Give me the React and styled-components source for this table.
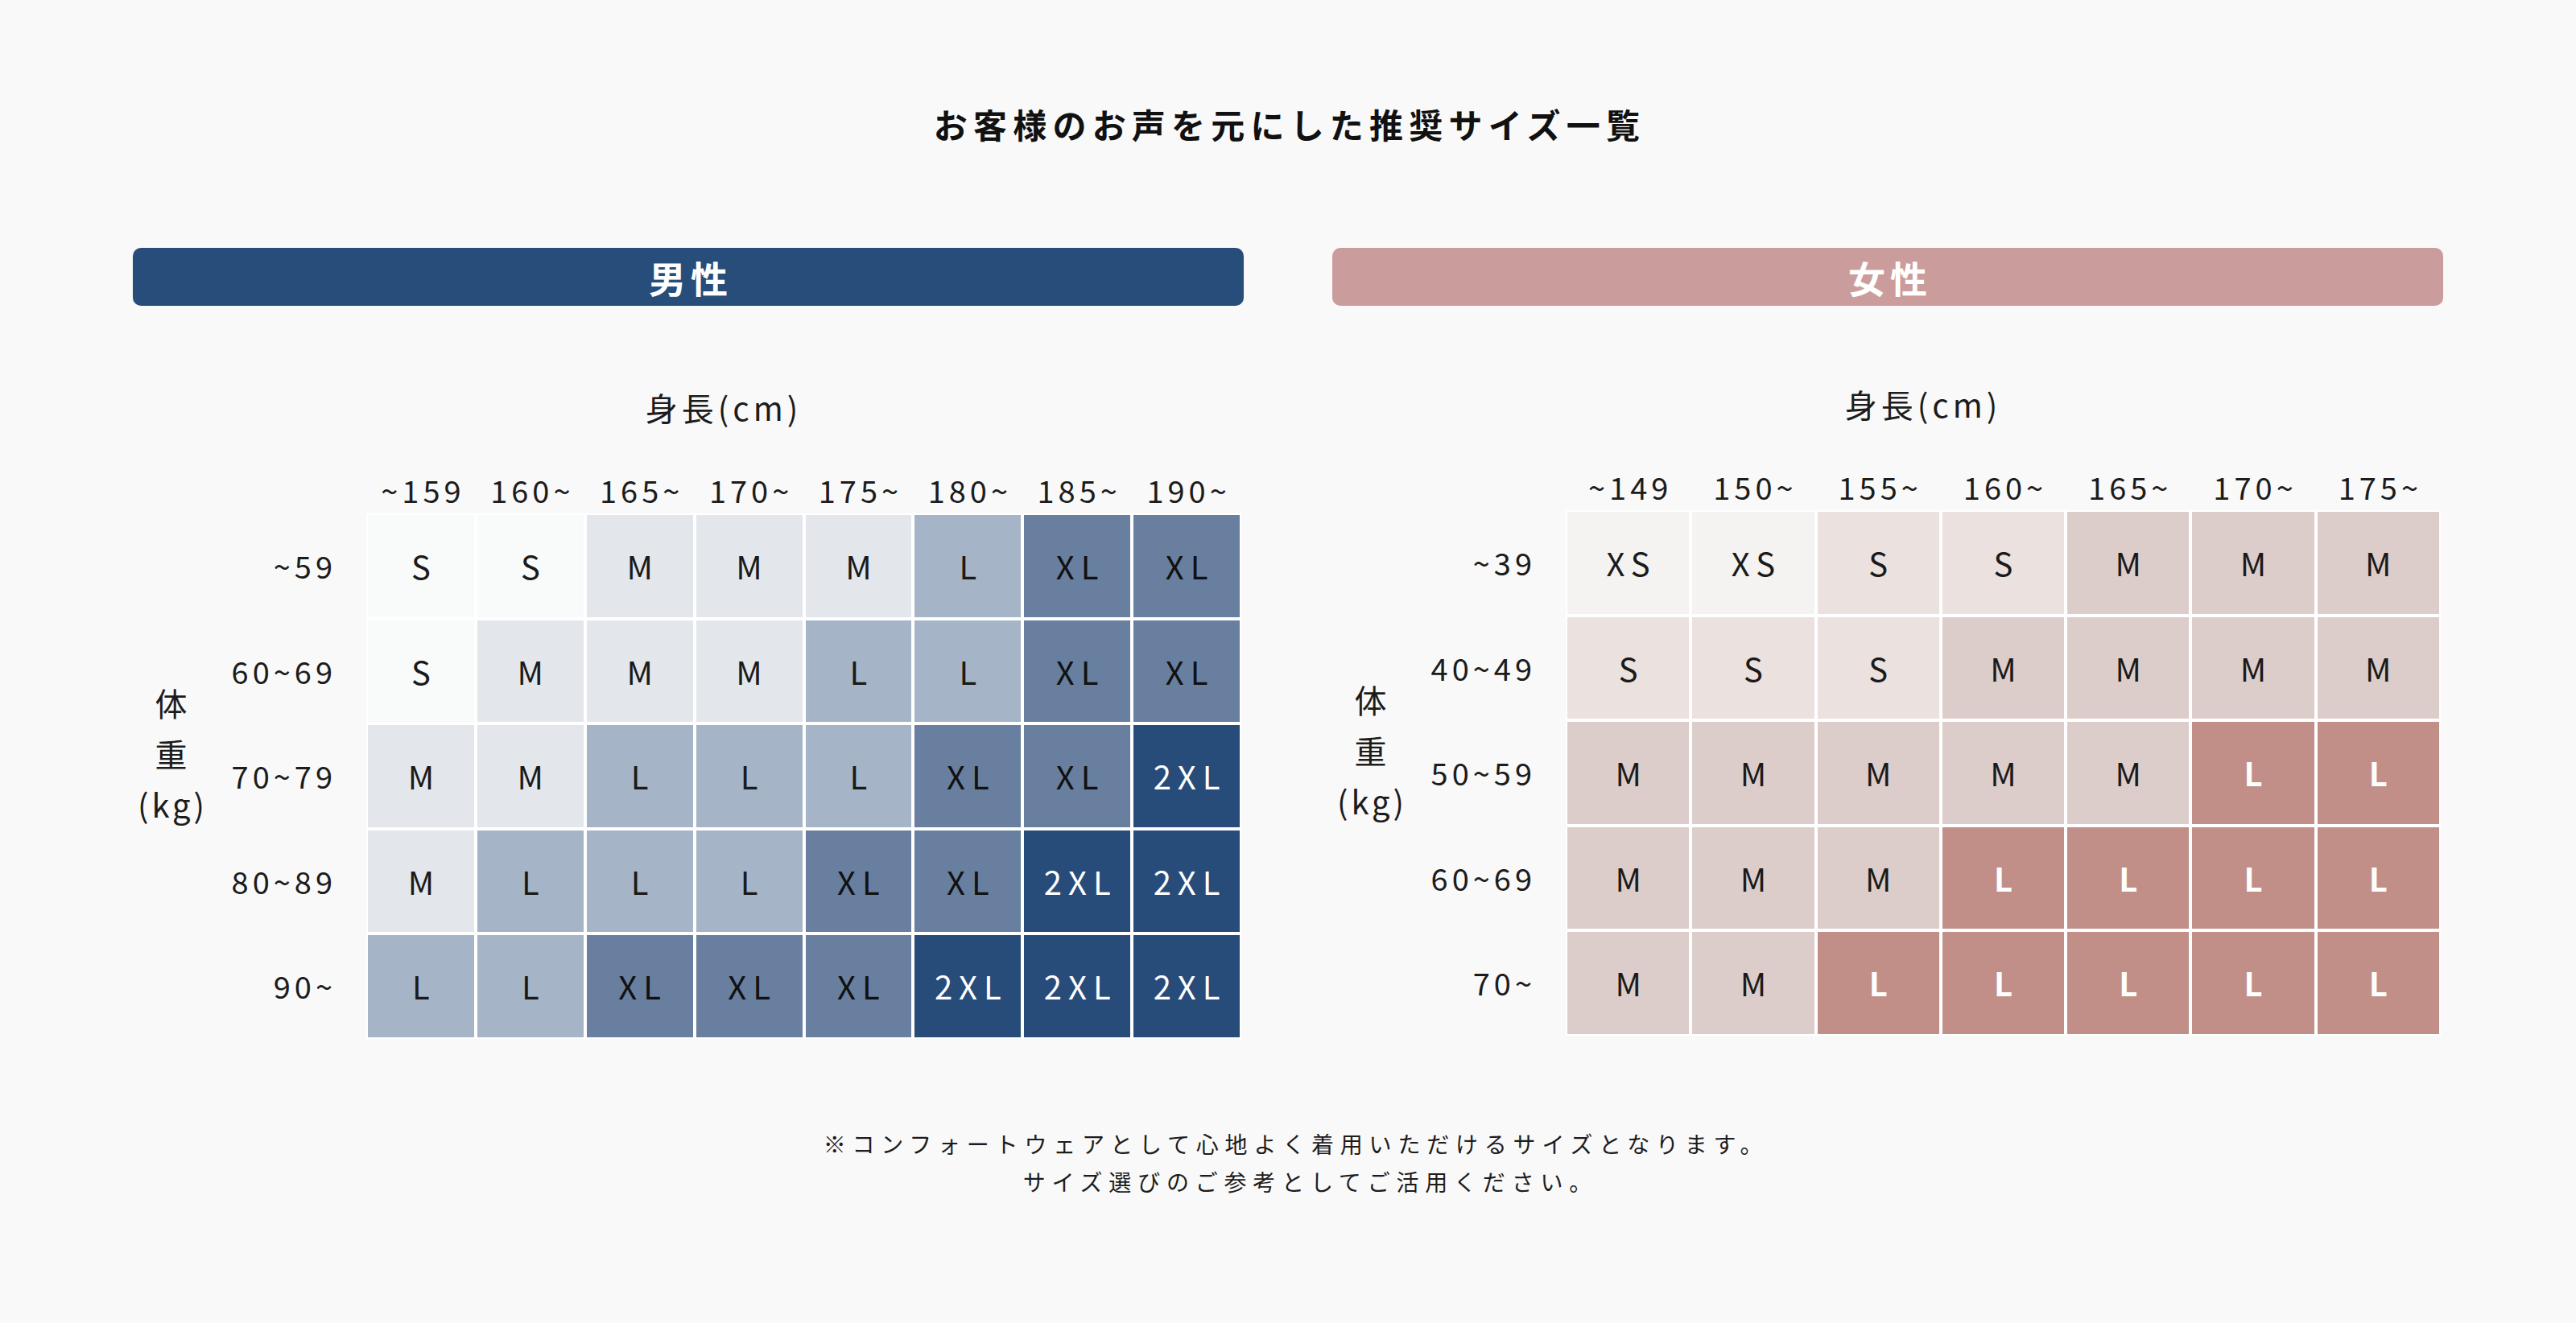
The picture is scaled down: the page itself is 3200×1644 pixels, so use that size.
import React from 'react';
import styled, { createGlobalStyle } from 'styled-components';

const GlobalStyle = createGlobalStyle`
  html, body { margin: 0; padding: 0; background: #f9f9f9; }
  body {
    font-family: "Noto Sans CJK JP", "Noto Sans", sans-serif;
    color: #1c1c1c;
  }
`;

const Page = styled.main`
  box-sizing: border-box;
  min-height: 1644px;
  padding: 133px 165px 0;
  display: flex;
  flex-direction: column;
`;

const Title = styled.h1`
  margin: 0;
  padding-left: 4px;
  font-size: 42px;
  line-height: 42px;
  font-weight: 700;
  letter-spacing: 7.2px;
  text-align: center;
  color: #111;
`;

const Panels = styled.div`
  margin-top: 133px;
  display: flex;
  gap: 110px;
`;

const Panel = styled.section`
  flex: 1 1 0;
  display: flex;
  flex-direction: column;
`;

const Bar = styled.h2`
  margin: 0;
  height: 72px;
  border-radius: 10px;
  background: ${(p) => p.$color};
  color: #fff;
  display: flex;
  align-items: center;
  justify-content: center;
  padding-left: 6px;
  font-size: 46px;
  font-weight: 700;
  letter-spacing: 6px;
`;

const Chart = styled.div`
  margin-top: ${(p) => p.$top}px;
  display: flex;
  flex-direction: column;
`;

const Caption = styled.div`
  margin-left: 95px;
  margin-right: 3px;
  padding-right: 4px;
  font-size: 40px;
  line-height: 40px;
  letter-spacing: 5px;
  text-align: center;
  margin-bottom: 64px;
`;

const Body = styled.div`
  display: flex;
  align-items: stretch;
`;

const VerticalLabel = styled.div`
  width: 95px;
  flex: none;
  display: flex;
  align-items: center;
  justify-content: center;
  text-align: center;
  padding-bottom: 8px;
  box-sizing: border-box;
  font-size: 40px;
  line-height: 63px;
  letter-spacing: 4px;
  padding-left: 4px;
`;

const Table = styled.table`
  flex: 1 1 auto;
  margin-right: 3px;
  border-collapse: separate;
  border-spacing: 0;
  table-layout: fixed;
`;

const Corner = styled.th`
  width: 195px;
  padding: 0;
`;

const ColHead = styled.th`
  padding: 0 0 10px 5px;
  font-size: 38px;
  line-height: 38px;
  font-weight: 400;
  letter-spacing: 5px;
  text-align: center;
  white-space: nowrap;
`;

const RowHead = styled.th`
  padding: 0 37px 0 0;
  font-size: 38px;
  line-height: 38px;
  font-weight: 400;
  letter-spacing: 5px;
  text-align: right;
  white-space: nowrap;
`;

const Cell = styled.td`
  height: 126.5px;
  padding: 0 0 0 8px;
  border: 2px solid #fff;
  background: ${(p) => p.$bg};
  color: ${(p) => p.$fg};
  font-weight: ${(p) => p.$weight};
  font-size: 40px;
  line-height: 40px;
  letter-spacing: 8px;
  text-align: center;
  white-space: nowrap;
`;

const Footer = styled.p`
  margin: 107px 0 0;
  padding-left: 20px;
  font-size: 28px;
  line-height: 47px;
  letter-spacing: 7.8px;
  text-align: center;
  color: #1c1c1c;
`;

const menPalette = {
  S: { bg: '#f9fafa', fg: '#1a1a1a', w: 400 },
  M: { bg: '#e3e7ec', fg: '#1a1a1a', w: 400 },
  L: { bg: '#a6b4c7', fg: '#1a1a1a', w: 400 },
  XL: { bg: '#687f9f', fg: '#111', w: 400 },
  '2XL': { bg: '#274c7a', fg: '#fff', w: 400 },
};

const womenPalette = {
  XS: { bg: '#f4f3f2', fg: '#1a1a1a', w: 400 },
  S: { bg: '#ebe1df', fg: '#1a1a1a', w: 400 },
  M: { bg: '#dccdca', fg: '#1a1a1a', w: 400 },
  L: { bg: '#c18f87', fg: '#fff', w: 700 },
};

const men = {
  title: '男性',
  color: '#274d7b',
  top: 106,
  palette: menPalette,
  cols: ['~159', '160~', '165~', '170~', '175~', '180~', '185~', '190~'],
  rows: [
    ['~59', ['S', 'S', 'M', 'M', 'M', 'L', 'XL', 'XL']],
    ['60~69', ['S', 'M', 'M', 'M', 'L', 'L', 'XL', 'XL']],
    ['70~79', ['M', 'M', 'L', 'L', 'L', 'XL', 'XL', '2XL']],
    ['80~89', ['M', 'L', 'L', 'L', 'XL', 'XL', '2XL', '2XL']],
    ['90~', ['L', 'L', 'XL', 'XL', 'XL', '2XL', '2XL', '2XL']],
  ],
};

const women = {
  title: '女性',
  color: '#cb9c9c',
  top: 102,
  palette: womenPalette,
  cols: ['~149', '150~', '155~', '160~', '165~', '170~', '175~'],
  rows: [
    ['~39', ['XS', 'XS', 'S', 'S', 'M', 'M', 'M']],
    ['40~49', ['S', 'S', 'S', 'M', 'M', 'M', 'M']],
    ['50~59', ['M', 'M', 'M', 'M', 'M', 'L', 'L']],
    ['60~69', ['M', 'M', 'M', 'L', 'L', 'L', 'L']],
    ['70~', ['M', 'M', 'L', 'L', 'L', 'L', 'L']],
  ],
};

function SizeChart({ data }) {
  return (
    <Panel>
      <Bar $color={data.color}>{data.title}</Bar>
      <Chart $top={data.top}>
        <Caption>身長(cm)</Caption>
        <Body>
          <VerticalLabel>
            体<br />重<br />(kg)
          </VerticalLabel>
          <Table>
            <thead>
              <tr>
                <Corner />
                {data.cols.map((c) => (
                  <ColHead key={c}>{c}</ColHead>
                ))}
              </tr>
            </thead>
            <tbody>
              {data.rows.map(([label, sizes]) => (
                <tr key={label}>
                  <RowHead>{label}</RowHead>
                  {sizes.map((s, i) => {
                    const p = data.palette[s];
                    return (
                      <Cell key={i} $bg={p.bg} $fg={p.fg} $weight={p.w}>
                        {s}
                      </Cell>
                    );
                  })}
                </tr>
              ))}
            </tbody>
          </Table>
        </Body>
      </Chart>
    </Panel>
  );
}

export default function App() {
  return (
    <>
      <GlobalStyle />
      <Page>
        <Title>お客様のお声を元にした推奨サイズ一覧</Title>
        <Panels>
          <SizeChart data={men} />
          <SizeChart data={women} />
        </Panels>
        <Footer>
          {'※コンフォートウェアとして心地よく着用いただけるサイズとなります。'}
          <br />
          {'\u3000サイズ選びのご参考としてご活用ください。'}
        </Footer>
      </Page>
    </>
  );
}
